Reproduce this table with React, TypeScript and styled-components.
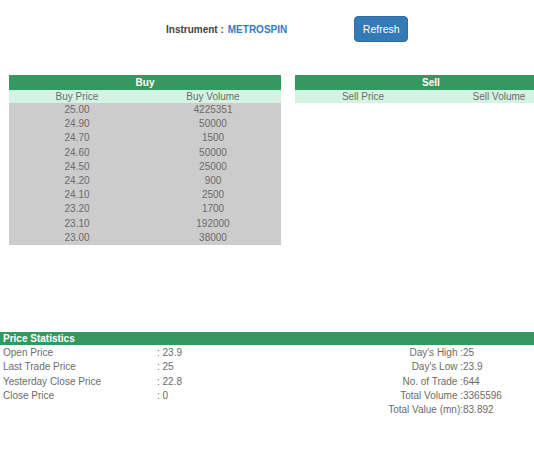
import React from "react";
import styled, { createGlobalStyle } from "styled-components";

const Global = createGlobalStyle`
  html, body { margin: 0; padding: 0; overflow: hidden; background: #fff; }
  body { font-family: "Liberation Sans", Arial, sans-serif; font-size: 10px; color: #6b6b6b; }
`;

const Page = styled.div`
  width: 534px;
  overflow: hidden;
`;

const TopBar = styled.div`
  display: flex;
  align-items: center;
  height: 26px;
  margin-top: 16px;
  padding-left: 166px;
`;

const InstrumentLabel = styled.span`
  font-weight: bold;
  color: #444;
  font-size: 10px;
`;

const InstrumentName = styled.span`
  font-weight: bold;
  color: #2f7ec1;
  font-size: 10px;
  margin-left: 4px;
`;

const RefreshButton = styled.button`
  margin-left: 67px;
  width: 54px;
  height: 26px;
  border: 1px solid #2e6da4;
  border-radius: 4px;
  background: #337ab7;
  color: #fff;
  font-family: "Liberation Sans", Arial, sans-serif;
  font-size: 10.5px;
  padding: 0;
`;

const Tables = styled.div`
  display: flex;
  gap: 14px;
  margin-top: 33px;
  padding-left: 9px;
  width: 600px;
  height: 257px;
  align-items: flex-start;
`;

const Book = styled.div`
  width: 272px;
  flex: none;
`;

const BookTitle = styled.div`
  height: 15px;
  line-height: 15px;
  background: #33995f;
  color: #fff;
  font-weight: bold;
  text-align: center;
`;

const Row = styled.div<{ $tone: "head" | "data" }>`
  display: grid;
  grid-template-columns: 1fr 1fr;
  height: ${(p) => (p.$tone === "head" ? "13px" : "14.2px")};
  line-height: ${(p) => (p.$tone === "head" ? "13px" : "14.2px")};
  background: ${(p) => (p.$tone === "head" ? "#d5f3e3" : "#cccccc")};
  text-align: center;
`;

const StatsBar = styled.div`
  height: 13px;
  line-height: 13px;
  background: #33995f;
  color: #fff;
  font-weight: bold;
  padding-left: 3px;
`;

const Stats = styled.div`
  display: flex;
  padding-top: 1px;
`;

const LeftStats = styled.div`
  display: grid;
  grid-template-columns: 154px 100px;
  padding-left: 3px;
  align-content: start;
  & > span { height: 14.3px; line-height: 14.3px; }
`;

const RightStats = styled.div`
  display: grid;
  grid-template-columns: 206px 80px;
  align-content: start;
  & > span { height: 14.3px; line-height: 14.3px; }
  & > span:nth-child(odd) { text-align: right; }
`;

const buys: [string, string][] = [
  ["25.00", "4225351"],
  ["24.90", "50000"],
  ["24.70", "1500"],
  ["24.60", "50000"],
  ["24.50", "25000"],
  ["24.20", "900"],
  ["24.10", "2500"],
  ["23.20", "1700"],
  ["23.10", "192000"],
  ["23.00", "38000"],
];

const left: [string, string][] = [
  ["Open Price", ": 23.9"],
  ["Last Trade Price", ": 25"],
  ["Yesterday Close Price", ": 22.8"],
  ["Close Price", ": 0"],
];

const right: [string, string][] = [
  ["Day's High :", "25"],
  ["Day's Low :", "23.9"],
  ["No. of Trade :", "644"],
  ["Total Volume :", "3365596"],
  ["Total Value (mn):", "83.892"],
];

export default function App() {
  return (
    <Page>
      <Global />
      <TopBar>
        <InstrumentLabel>Instrument :</InstrumentLabel>
        <InstrumentName>METROSPIN</InstrumentName>
        <RefreshButton>Refresh</RefreshButton>
      </TopBar>
      <Tables>
        <Book>
          <BookTitle>Buy</BookTitle>
          <Row $tone="head">
            <span>Buy Price</span>
            <span>Buy Volume</span>
          </Row>
          {buys.map(([p, v]) => (
            <Row $tone="data" key={p}>
              <span>{p}</span>
              <span>{v}</span>
            </Row>
          ))}
        </Book>
        <Book>
          <BookTitle>Sell</BookTitle>
          <Row $tone="head">
            <span>Sell Price</span>
            <span>Sell Volume</span>
          </Row>
        </Book>
      </Tables>
      <StatsBar>Price Statistics</StatsBar>
      <Stats>
        <LeftStats>
          {left.map(([l, v]) => (
            <React.Fragment key={l}>
              <span>{l}</span>
              <span>{v}</span>
            </React.Fragment>
          ))}
        </LeftStats>
        <RightStats>
          {right.map(([l, v]) => (
            <React.Fragment key={l}>
              <span>{l}</span>
              <span>{v}</span>
            </React.Fragment>
          ))}
        </RightStats>
      </Stats>
    </Page>
  );
}
